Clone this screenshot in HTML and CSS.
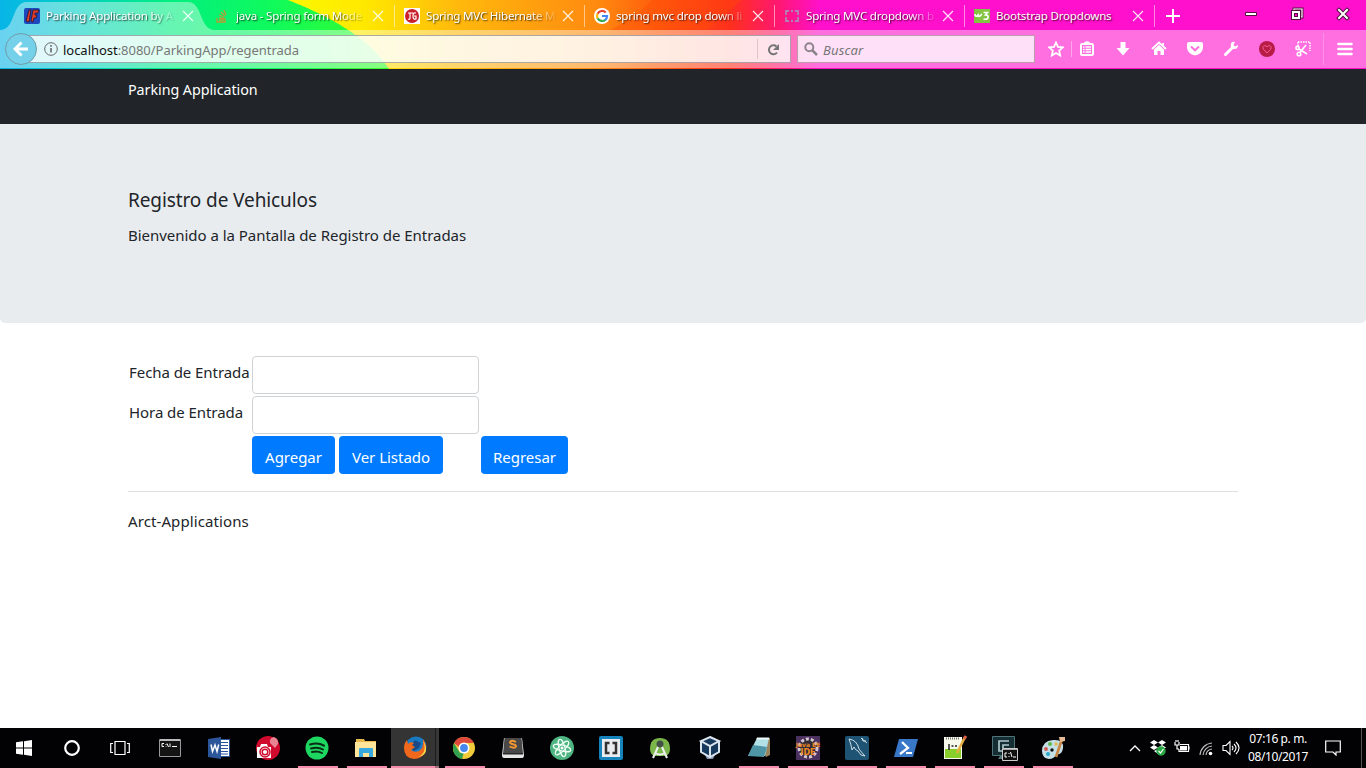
FILE: index.html
```html
<!DOCTYPE html>
<html lang="es">
<head>
<meta charset="utf-8">
<title>Parking Application</title>
<link rel="stylesheet" href="styles.css">
</head>
<body>
<div class="screen">
<header class="browser">
  <svg class="theme" width="1366" height="69" viewBox="0 0 1366 69" preserveAspectRatio="none">
    <defs>
      <linearGradient id="cool" gradientUnits="userSpaceOnUse" x1="0" y1="40" x2="400" y2="0"><stop offset="0" stop-color="#08b4e8"/><stop offset=".2" stop-color="#00d0c4"/><stop offset=".42" stop-color="#00ee82"/><stop offset=".68" stop-color="#10fa5c"/><stop offset="1" stop-color="#40ff20"/></linearGradient>
      <linearGradient id="warm" gradientUnits="userSpaceOnUse" x1="290" y1="0" x2="820" y2="0"><stop offset="0" stop-color="#fcf800"/><stop offset=".14" stop-color="#ffe800"/><stop offset=".32" stop-color="#ffb80c"/><stop offset=".58" stop-color="#ff8a10"/><stop offset=".7" stop-color="#ff5a0c"/><stop offset=".83" stop-color="#ff301c"/><stop offset=".92" stop-color="#ff1870"/><stop offset="1" stop-color="#ff10cc"/></linearGradient>
    </defs>
    <path fill="url(#cool)" d="M0 0h420v69H0z"/>
    <path fill="url(#warm)" d="M288 0H822V69H389Q365 30 288 0z"/>
    <path fill="#ff10cc" d="M820 0h546v69H820z"/>
    <path fill="#ff4a08" opacity=".35" d="M652 0h90l-35 30H610Q635 18 652 0z"/>
  </svg>
  <div class="tabs">
    <div class="tab active">
      <svg class="tabshape" width="212" height="30" viewBox="0 0 212 30"><path d="M0 30C16 30 11 2 27 2H188C203 2 199 30 215 30z" fill="#fff" fill-opacity=".4"/></svg>
      <svg class="fav" viewBox="0 0 16 16"><rect width="16" height="16" rx="2" fill="#1d49bd"/><path d="M2 13L5 2h2L5 14zM7 13L9 2h6l-1 3h-3v2h2l-1 3h-2l-1 4z" fill="#e13b2b" stroke="#25152c" stroke-width=".8"/></svg>
      <span class="title">Parking Application by A</span><svg class="close" viewBox="0 0 12 12"><path d="M1 1l10 10M11 1L1 11"/></svg></div>
    <div class="tab">
      <svg class="fav" viewBox="0 0 16 16"><path d="M3 10v4h8v-4M5 12h5M5 10l5 .5M5 7l5 2M7 4l4 4M10 2l2 5" fill="none" stroke="#b89a38" stroke-width="1.3"/></svg>
      <span class="title">java - Spring form Mode</span><svg class="close" viewBox="0 0 12 12"><path d="M1 1l10 10M11 1L1 11"/></svg></div>
    <div class="tab">
      <svg class="fav" viewBox="0 0 16 16"><path fill="#fff" d="M0 0h16v16H0z"/><circle cx="8" cy="8" r="7" fill="#c9202c"/><path d="M4 5h5M6 5v5q0 2-2 1M12 5Q9 4 9 8q0 4 3 3V8h-2" fill="none" stroke="#fff" stroke-width="1.2"/></svg>
      <span class="title">Spring MVC Hibernate M</span><svg class="close" viewBox="0 0 12 12"><path d="M1 1l10 10M11 1L1 11"/></svg></div>
    <div class="tab">
      <svg class="fav" viewBox="0 0 16 16"><circle cx="8" cy="8" r="8" fill="#fff"/><g fill="none" stroke-width="2.2"><path d="M11.7 4.5A5 5 0 0 0 3.6 5.7" stroke="#ea4335"/><path d="M3.6 5.6a5 5 0 0 0 0 4.8" stroke="#fbbc05"/><path d="M3.6 10.3a5 5 0 0 0 7.8 1.4" stroke="#34a853"/><path d="M11.3 11.8A5 5 0 0 0 13 8H8" stroke="#4285f4"/></g></svg>
      <span class="title">spring mvc drop down li</span><svg class="close" viewBox="0 0 12 12"><path d="M1 1l10 10M11 1L1 11"/></svg></div>
    <div class="tab">
      <svg class="fav" viewBox="0 0 16 16"><path d="M5 3H2v4M2 9v4h3M7 3h2M7 13h2M11 3h3v4M14 9v4h-3" fill="none" stroke="#b582b4" stroke-width="1.8"/></svg>
      <span class="title">Spring MVC dropdown b</span><svg class="close" viewBox="0 0 12 12"><path d="M1 1l10 10M11 1L1 11"/></svg></div>
    <div class="tab">
      <svg class="fav" viewBox="0 0 16 16"><path fill="#83c441" d="M0 1h16v14H0z"/><path d="M1 6q0 3 2 2l1-1q0 2 2 1l2-2M9.500 4.500h4L11.500 7q3 0 2.500 2.500T9.500 11" fill="none" stroke="#fff" stroke-width="1.600"/></svg>
      <span class="title">Bootstrap Dropdowns</span><svg class="close" viewBox="0 0 12 12"><path d="M1 1l10 10M11 1L1 11"/></svg></div>
    <svg class="newtab" viewBox="0 0 14 14"><path d="M7 0v14M0 7h14" stroke="#fff" stroke-width="2"/></svg>
    <div class="winbtns">
      <svg width="14" height="14" viewBox="0 0 14 14"><path d="M1.5 5.5h11v3h-11z" fill="#fff" stroke="#52103e"/></svg>
      <svg width="14" height="14" viewBox="0 0 14 14"><path d="M4 3V2h8v8h-1" fill="none" stroke="#52103e" stroke-width="3"/><path d="M4 3V2h8v8h-1" fill="none" stroke="#fff" stroke-width="1.2"/><path d="M3 5h6v6H3z" fill="none" stroke="#52103e" stroke-width="4"/><path d="M3 5h6v6H3z" fill="none" stroke="#fff" stroke-width="2"/></svg>
      <svg width="14" height="14" viewBox="0 0 14 14"><path d="M3 3l8 8M11 3l-8 8" stroke="#52103e" stroke-width="4" stroke-linecap="square"/><path d="M3 3l8 8M11 3l-8 8" stroke="#fff" stroke-width="2" stroke-linecap="square"/></svg>
    </div>
  </div>
  <div class="toolbar">
    <div class="back"><svg width="16" height="16" viewBox="0 0 16 16"><path d="M15 8H3M8.500 1.500L2 8l6.500 6.500" fill="none" stroke="#fff" stroke-width="3"/></svg></div>
    <div class="url">
      <svg class="info" width="14" height="14" viewBox="0 0 14 14"><circle cx="7" cy="7" r="6.300" fill="none" stroke="#666"/><path d="M7 3v1.800M7 6v4.500" stroke="#666" stroke-width="1.600"/></svg>
      <span class="address"><b>localhost</b>:8080/ParkingApp/regentrada</span>
      <span class="reload"><svg width="13" height="13" viewBox="0 0 13 13"><path d="M10 9.500A4.500 4.500 0 1 1 9.500 3.500" fill="none" stroke="#777" stroke-width="2"/><path d="M12 1v6H6z" fill="#777"/></svg></span>
    </div>
    <div class="search"><svg width="14" height="14" viewBox="0 0 14 14"><circle cx="5.300" cy="5.300" r="4" fill="none" stroke="#8e858c" stroke-width="2"/><path d="M8 8l5 5" stroke="#8e858c" stroke-width="2.500"/></svg><i>Buscar</i></div>
    <div class="tools">
      <svg viewBox="0 0 16 16"><path d="M8 1.500l2 4.400 4.800.5-3.600 3.200 1 4.900L8 12l-4.200 2.500 1-4.900L1.200 6.400 6 5.900z" fill="none" stroke="#fff" stroke-width="1.800"/></svg>
      <svg viewBox="0 0 16 16"><path d="M5 1.500Q8-1 11 1.500V3H5z" fill="#fff"/><rect x="2" y="3" width="12" height="11" rx="1" fill="none" stroke="#fff" stroke-width="2"/><path d="M4 6h1.500M6.500 6H12M4 8.500h1.500M6.500 8.500H12M4 11h1.500M6.500 11H12" stroke="#fff" stroke-width="1.300"/></svg>
      <svg viewBox="0 0 16 16"><path d="M5.500 1h5v6h4L8 14.500 1.500 7h4z" fill="#fff"/></svg>
      <svg viewBox="0 0 16 16"><path d="M1 8l7-6.500L15 8M12 2v3" fill="none" stroke="#fff" stroke-width="1.800"/><path d="M3 8.500l5-4.800 5 4.800V14H9.500v-4h-3v4H3z" fill="#fff"/></svg>
      <svg viewBox="0 0 16 16"><path d="M2 1h12q2 0 2 2v4q-1 6-8 7.500Q1 13 0 7V3q0-2 2-2z" fill="#fff"/><path d="M4 5.500l4 3.800 4-3.800" fill="none" stroke="#ff70dc" stroke-width="2"/></svg>
      <svg viewBox="0 0 16 16"><path d="M2.500 13.500l7-7" stroke="#fff" stroke-width="3" stroke-linecap="round"/><path d="M12 1q-4-1-4.300 3.200Q8 8 11.500 8T15 4l-3 1.500L10.500 4z" fill="#fff"/></svg>
      <svg viewBox="0 0 16 16"><circle cx="8" cy="8" r="8" fill="#b61c45"/><path d="M8 12L4.300 8.200Q3 5 5.800 4.600 7.400 4.700 8 6q.6-1.300 2.200-1.400Q13 5 11.700 8.200z" fill="none" stroke="#f65e91"/></svg>
      <svg viewBox="0 0 16 16"><path d="M3 1h12v9M3 1v4" fill="none" stroke="#fff" stroke-width="1.500" stroke-dasharray="1.500 1"/><g fill="none" stroke="#fff" stroke-width="1.600"><circle cx="2.500" cy="7" r="1.600"/><circle cx="4" cy="13" r="1.800"/><path d="M4 8l8 5M5 11.500L11 4"/></g></svg>
      <svg viewBox="0 0 16 16"><path d="M1.500 3h13M1.500 8h13M1.500 13h13" stroke="#fff" stroke-width="2.700" stroke-linecap="round"/></svg>
    </div>
  </div>
</header>

<main class="page">
  <nav class="navbar"><a class="brand">Parking Application</a></nav>
  <section class="jumbotron"><h1>Registro de Vehiculos</h1><p>Bienvenido a la Pantalla de Registro de Entradas</p></section>
  <div class="container">
    <form class="entry">
      <label>Fecha de Entrada</label><input class="field" type="text"><span></span>
      <label>Hora de Entrada</label><input class="field" type="text"><span></span>
      <span></span><div class="actions"><button type="button" class="add">Agregar</button><button type="button" class="list">Ver Listado</button></div><button type="button" class="return">Regresar</button>
    </form>
    <footer>Arct-Applications</footer>
  </div>
</main>

<div class="taskbar">
  <div class="system">
    <svg width="16" height="16" viewBox="0 0 16 16"><path fill="#fff" d="M0 2.300L7 1.300V7.500H0zM8 1.200L16 0v7.500H8zM0 8.500h7v6.200l-7-1zM8 8.500h8V16l-8-1.200z"/></svg>
    <svg width="16" height="16" viewBox="0 0 16 16"><circle cx="8" cy="8" r="6.800" fill="none" stroke="#fff" stroke-width="2.200"/></svg>
    <svg width="20" height="16" viewBox="0 0 20 16"><path d="M5 1.500h10v13H5zM3 3.500H.7v9H3M17 3.500h2.300v9H17" fill="none" stroke="#fff" stroke-width="1.200"/></svg>
  </div>
  <div class="apps">
    <div class="app"><svg viewBox="0 0 24 24"><path fill="#141414" stroke="#999" d="M1.500 3.500h21v17h-21z"/><path fill="#bbb" d="M2 3h20v2H2z"/><path d="M6 7.500H4v3h2M8 8v1M8 10.500v.500M9 7.500l1.500 3.500M12 7.500v3.500M14 10.500h5" stroke="#fff" fill="none"/></svg></div>
    <div class="app"><svg viewBox="0 0 24 24"><path fill="#fff" stroke="#2b579a" d="M12 3.500h10.500v17H12z"/><path d="M14 6.500h7M14 9.500h7M14 12.500h7M14 15.500h7M14 18h7" stroke="#2b579a"/><path fill="#2b579a" d="M1 3l13-2v22L1 21z"/><path d="M4 8.500l1.500 7L8 9l2 6.500 1.700-7" fill="none" stroke="#fff" stroke-width="1.500"/></svg></div>
    <div class="app"><svg viewBox="0 0 24 24"><circle cx="12" cy="12" r="12" fill="#cf0a2c"/><path d="M14 7q-1-5 4-6 5 2 4 7l-3 4z" fill="#e98492"/><path d="M1 11h3l1-3h6l1 3h3v11H1z" fill="#fff"/><circle cx="9" cy="16" r="5" fill="#fff" stroke="#cf0a2c" stroke-width="1.500"/><circle cx="9" cy="16" r="2.800" fill="none" stroke="#cf0a2c" stroke-width="1.500"/></svg></div>
    <div class="app open"><svg viewBox="0 0 24 24"><circle cx="12" cy="12" r="11.500" fill="#1ed760"/><path d="M5 8.500q8-2.500 14 1.200M6 12.500q7-2 12 1M7 16q5.500-1.500 10 1" fill="none" stroke="#0c2b15" stroke-width="2" stroke-linecap="round"/></svg></div>
    <div class="app open"><svg viewBox="0 0 24 24"><path fill="#e7b84c" d="M2 3h8l1 2h11v5H2z"/><path fill="#ffe49a" d="M1 6h21v15H1z"/><path fill="#38a9df" d="M5 21v-8q0-1 1-1h12q1 0 1 1v8h-4v-4H9v4z"/></svg></div>
    <div class="app open current"><svg viewBox="0 0 24 24"><circle cx="13" cy="11" r="10.500" fill="#197ac4"/><path d="M12 4l6 3-2 5-5 3-4-4z" fill="#194a87"/><path d="M20 3q5 7 2 13-3 7-11 7Q1 22 1 12 1 7 4 4l1 4q2-3 6-1L9 9l3 2-4 3q3 3 8 1 5-3 4-12z" fill="#ef681b"/><path d="M20 5q5 11-5 16 11-2 7-13z" fill="#ffd848"/></svg></div>
    <div class="app open"><svg viewBox="0 0 24 24"><circle cx="12" cy="12" r="11" fill="#f1cb39"/><path d="M2 7Q5 1 12 1t10 6H12q-4 0-5 4z" fill="#df493b"/><path d="M2 7l6 10 4-1-2 7Q1 21 1 12q0-3 1-5" fill="#32a050"/><circle cx="12" cy="12" r="4.700" fill="#4587ed" stroke="#fff" stroke-width="1.600"/></svg></div>
    <div class="app"><svg viewBox="0 0 24 24"><path fill="#e6e6e6" d="M3 2h18l2 17q0 3-2 3H3q-2 0-2-3z"/><path fill="#484848" d="M3.500 2h17l1.500 16H2z"/><path fill="#292929" d="M2 17h20v1.500H2z"/><path d="M15 6q-5-2.500-6 0 0 1.800 3 2.300t3 2.200q-1 2.500-6.500 0" fill="none" stroke="#f59730" stroke-width="1.900"/></svg></div>
    <div class="app"><svg viewBox="0 0 24 24"><circle cx="12" cy="12" r="12" fill="#4eb482"/><g fill="none" stroke="#effff5" stroke-width="1.200"><ellipse cx="12" cy="12" rx="9" ry="3" transform="rotate(15 12 12)"/><ellipse cx="12" cy="12" rx="9" ry="3" transform="rotate(75 12 12)"/><ellipse cx="12" cy="12" rx="9" ry="3" transform="rotate(135 12 12)"/></g><circle cx="12" cy="12" r="1.500" fill="#fff"/></svg></div>
    <div class="app"><svg viewBox="0 0 24 24"><rect width="24" height="24" rx="2" fill="#1583bc"/><path fill="#e9edef" d="M3 3h18v18H3z"/><path d="M10.500 7H7v10h3.500M13.500 7H17v10h-3.500" fill="none" stroke="#343434" stroke-width="2.500"/></svg></div>
    <div class="app"><svg viewBox="0 0 24 24"><path d="M2 13Q2 2 12 2t10 11q0 5-4 7H6q-4-2-4-7" fill="#7ab649"/><circle cx="12" cy="8" r="3.500" fill="#445147"/><path d="M10 11L5 22M14 11l5 11M7 17q5 3 10 0" fill="none" stroke="#f0f0f0" stroke-width="2"/></svg></div>
    <div class="app"><svg viewBox="0 0 24 24"><path fill="#8794b3" d="M7 19h10l-2 4H9z"/><path fill="#17395d" d="M12 1l10 4-1 11-9 5-9-5L2 5z"/><path d="M12 1l9 4-9 5-9-5zM3 5v11l9 5 9-5V5M12 10v11" fill="none" stroke="#dbe5ee" stroke-width="2"/></svg></div>
    <div class="app open"><svg viewBox="0 0 24 24"><path d="M9 2h14v17l-4 2z" fill="#98845d"/><path fill="#b2e0e7" d="M10 2h12l-4 18H1z"/><path fill="#4e96a6" d="M6 9l14 2-3 10L1 20z"/><path d="M10 2.500h12" stroke="#effafa" stroke-width="2"/></svg></div>
    <div class="app open"><svg viewBox="0 0 24 24"><path fill="#4a315f" d="M0 0h24v24H0z"/><circle cx="12" cy="12" r="9" fill="#302c37" stroke="#d6c7cf" stroke-width="3" stroke-dasharray="3 2"/><text class="ee" x="12" y="11">Java EE</text><text class="ide" x="12" y="19">IDE</text></svg></div>
    <div class="app open"><svg viewBox="0 0 24 24"><rect width="24" height="24" rx="2" fill="#1e5373"/><path d="M4 3q8 1 10 10 3 4 6 7l-4-1-3-4q-3-1-4-4l-2 3Q6 8 4 3M16 2l6 5M17 2l1 3h3" fill="none" stroke="#e3edf2" stroke-width=".9"/></svg></div>
    <div class="app open"><svg viewBox="0 0 24 24"><path fill="#3978c9" d="M5 3h19l-5 18H0z"/><path d="M8 6l6 6-8 6M12 17h6" fill="none" stroke="#fff" stroke-width="2.200"/></svg></div>
    <div class="app open"><svg viewBox="0 0 24 24"><path fill="#f8f9ed" d="M1 1h18v22H1z"/><path fill="#89cf2b" d="M2 13h16v9H2z"/><path d="M3 2.500h14" stroke="#777" stroke-width="2" stroke-dasharray="1 1"/><path d="M6 8v6M8.500 10h2M12 10h2" stroke="#222" stroke-width="1.500"/><path d="M22 1L14 17" stroke="#e7ae45" stroke-width="2.500"/><path d="M23 0l-2 3" stroke="#db6045" stroke-width="3"/></svg></div>
    <div class="app open"><svg viewBox="0 0 24 24"><path fill="#142e34" stroke="#4e747a" d="M.500.500h22v19H.500z"/><path d="M17 5H7v10h9M17 9h-6v3" fill="none" stroke="#aec7cb" stroke-width="1.700"/><path d="M8 20h9v3H6z" fill="#54777b"/><path fill="#111" stroke="#ccc" d="M10.500 12.500h15v12h-15z"/><path d="M11 13.500h14" stroke="#aaa"/><path d="M15 17h-2v4h2M17 17v1M17 20v1M18.500 16l1.500 5M21 21h3" stroke="#fff" fill="none"/></svg></div>
    <div class="app open"><svg viewBox="0 0 24 24"><path fill="#c4dfe5" d="M1 15Q1 5 12 4t10 8q-1 7-6 6-3 5-8 5-7-1-7-8"/><circle cx="5" cy="13" r="1.900" fill="#d4564c"/><circle cx="9" cy="8" r="2" fill="#61b64d"/><circle cx="15" cy="8" r="1.700" fill="#e5b74d"/><circle cx="7" cy="18" r="2" fill="#27a9c8"/><circle cx="11" cy="14" r="1.700" fill="#111"/><path d="M21 3L15 21" stroke="#c98644" stroke-width="2.700"/><path d="M18 1l6 0v4l-5 1z" fill="#e5bb93"/></svg></div>
  </div>
  <div class="tray">
    <svg width="12" height="16" viewBox="0 0 12 16"><path d="M1 11l5-5 5 5" fill="none" stroke="#fff" stroke-width="1.300"/></svg>
    <svg width="16" height="16" viewBox="0 0 16 16"><path fill="#fff" d="M4 0l4 2.500L4 5 0 2.500zM12 0l4 2.500L12 5 8 2.500zM4 5l4 2.500L4 10 0 7.500zM12 5l4 2.500-4 2.500-4-2.500zM4 11l4-2 4 2-4 3z"/><circle cx="11" cy="11" r="4.700" fill="#28a843"/><path d="M8.500 11l2 2 3-4" fill="none" stroke="#fff" stroke-width="1.200"/></svg>
    <svg width="16" height="16" viewBox="0 0 16 16"><path d="M6 4.500h8.500v7H5V9M15 6.500v3M1 2v3h4V2M2 0v2M4 0v2M3 5v4h2" fill="none" stroke="#fff" stroke-width="1.200"/><path fill="#fff" d="M6 6h7v4.500H6z"/></svg>
    <svg width="16" height="16" viewBox="0 0 16 16"><g fill="none" stroke="#bcbcbc" stroke-width="1.200"><path d="M2 15A13 13 0 0 1 14 3M5 15a10 10 0 0 1 9-9M8 15a7 7 0 0 1 6-6"/></g><circle cx="12.500" cy="13.500" r="1.800" fill="#fff"/></svg>
    <svg width="18" height="16" viewBox="0 0 18 16"><path d="M1 5.500h3l4-4v13l-4-4H1zM10 6q2 2 0 4M12 4q4 4 0 8M14 2q6 6 0 12" fill="none" stroke="#fff" stroke-width="1.100"/></svg>
    <div class="clock"><span>07:16 p. m.</span><span>08/10/2017</span></div>
    <svg width="16" height="16" viewBox="0 0 16 16"><path d="M.700 1h14.600v11H11v3l-3-3H.700z" fill="none" stroke="#fff" stroke-width="1.200"/></svg>
    <span class="peek"></span>
  </div>
</div>
</div>
</body>
</html>
```

FILE: styles.css
```css
* { box-sizing: border-box; }
body { margin: 0; overflow: hidden; font-family: "Noto Sans", "Open Sans", sans-serif; color: #212529; }
.screen { width: 1366px; height: 768px; display: flex; flex-direction: column; background: #fff; }
.browser { height: 69px; position: relative; border-bottom: 1px solid #241b24; isolation: isolate; }
.theme { position: absolute; left: 0; top: 0; z-index: -1; }

.tabs { height: 30px; padding-left: 14px; display: flex; align-items: center; }
.tab { width: 190px; height: 30px; padding: 2px 10px 0 10px; display: flex; align-items: center; position: relative; flex: none; }
.tab:not(.active):not(:nth-child(2))::before { content: ""; position: absolute; left: 0; top: 5px; height: 22px; border-left: 1px solid #ffffff80; }
.tabshape { position: absolute; left: -14px; top: 0; z-index: -1; overflow: visible; }
.fav { width: 16px; height: 16px; flex: none; }
.title { margin-left: 6px; width: 136px; height: 20px; line-height: 19px; white-space: nowrap; font-size: 11.6px; letter-spacing: -.22px; color: #fff; text-shadow: 1px 1px 1.5px #000b; mask-image: linear-gradient(90deg, #000 104px, transparent 133px); }
.tab:nth-child(6) .title { mask-image: none; }
.close { width: 12px; height: 12px; flex: none; }
.close path { stroke: #fff; stroke-width: 1.1; opacity: .9; }
.newtab { width: 14px; height: 14px; margin: 2px 0 0 12px; }
.tab:nth-child(6)::after { content: ""; position: absolute; right: -1px; top: 5px; height: 22px; border-left: 1px solid #ffffff80; }
.winbtns { display: flex; gap: 32px; margin-left: auto; padding: 0 16px 2px 0; }

.toolbar { height: 38px; display: flex; align-items: center; background: #fff6; position: relative; }
.back { width: 32px; height: 32px; border-radius: 50%; border: 1px solid #6f9ea9; margin-left: 5px; display: flex; align-items: center; justify-content: center; background: #75d0ea; flex: none; z-index: 1; }
.url { height: 28px; width: 766px; margin: 0 0 0 -12px; padding-left: 18px; display: flex; align-items: center; background: #ffffffcc; border: 1px solid #3346; flex: none; }
.address { margin: 2px 0 0 5px; font-size: 13px; letter-spacing: -.03px; color: #777; white-space: nowrap; }
.address b { color: #111; font-weight: 400; }
.reload { margin-left: auto; width: 33px; height: 20px; border-left: 1px solid #0002; display: flex; align-items: center; padding-left: 9px; }
.search { width: 238px; height: 28px; border: 1px solid #6346; margin-left: 6px; display: flex; align-items: center; padding-left: 6px; background: #ffffffc8; font-size: 13px; letter-spacing: .15px; color: #777; gap: 5px; flex: none; }
.search i { margin-top: 2px; }
.tools { flex: 1; display: flex; gap: 20px; align-items: center; padding-left: 13px; position: relative; }
.tools::before, .tools::after { content: ""; position: absolute; width: 1px; background: #ffffff60; }
.tools::before { left: 36px; top: 0; height: 16px; }
.tools::after { right: 42px; top: -8px; height: 32px; background: #ffffff38; }
.tools svg { width: 16px; height: 16px; flex: none; }
.tools svg:nth-child(2) { margin-left: -5px; }
.tools svg:last-child { margin-left: 6px; }

.page { flex: 1; font-size: 15px; }
.navbar { height: 55px; background: #212529; padding: 8px 128px; line-height: 24px; color: #fff; }
.brand { font-size: 14.3px; letter-spacing: -.05px; }
.jumbotron { height: 199px; background: #e9ecef; border-radius: 0 0 5px 5px; padding: 64px 128px; }
h1 { margin: 0 0 11px; font-size: 19px; line-height: 24px; font-weight: 400; letter-spacing: -.1px; }
p { margin: 0; line-height: 24px; letter-spacing: -.03px; }
.container { width: 1110px; margin: 33px 0 0 128px; }
.entry { display: grid; grid-template-columns: 121px 227px 87px; gap: 2px; padding: 0 1px 17px; border-bottom: 1px solid #e0e1e2; }
label { line-height: 24px; padding-top: 4px; letter-spacing: -.06px; white-space: nowrap; }
.field { width: 227px; height: 38px; border: 1px solid #d0d3d6; border-radius: 4px; background: #fff; padding: 6px 12px; }
.actions { display: flex; gap: 4px; }
button { height: 38px; border: 0; border-radius: 4px; background: #007bff; color: #fff; font: 15px/24px "Noto Sans", sans-serif; letter-spacing: -.02px; padding: 3px 0 0; white-space: nowrap; }
.add { width: 83px; }
.list { width: 104px; }
.return { width: 87px; }
footer { margin-top: 17px; line-height: 24px; letter-spacing: .1px; }

.taskbar { height: 40px; background: #020205; display: flex; color: #fff; }
.system { width: 145.5px; display: flex; align-items: center; padding-left: 16px; gap: 38px; flex: none; }
.system svg:nth-child(2) { margin-right: -8px; margin-left: -6px; }
.apps { display: flex; flex: none; }
.app { width: 49.05px; height: 40px; display: flex; align-items: center; justify-content: center; position: relative; }
.app svg { width: 24px; height: 24px; overflow: visible; }
.open::after { content: ""; position: absolute; bottom: 0; left: 5px; width: 40px; height: 2px; background: #f58cab; }
.current { background: linear-gradient(90deg, #343435 0 44px, #1b1b1c 44px 45px, #373738 45px); background-size: 48px 40px; background-repeat: no-repeat; }
.current::after { left: 0; width: 48px; background: linear-gradient(90deg, #f58cab 44px, #a66c7e 44px); }
.ee, .ide { font: bold 6px "DejaVu Sans", sans-serif; fill: #f18a23; text-anchor: middle; }
.ide { font-size: 8px; }
.tray { margin-left: auto; display: flex; align-items: center; gap: 8px; padding-right: 4px; }
.tray > svg:first-child { margin-right: 1px; }
.clock { font-size: 12px; line-height: 18px; letter-spacing: -.4px; display: flex; flex-direction: column; width: 60px; align-items: center; margin-right: 9px; white-space: nowrap; }
.peek { width: 1px; height: 40px; background: #555; margin-left: 12px; }
```
